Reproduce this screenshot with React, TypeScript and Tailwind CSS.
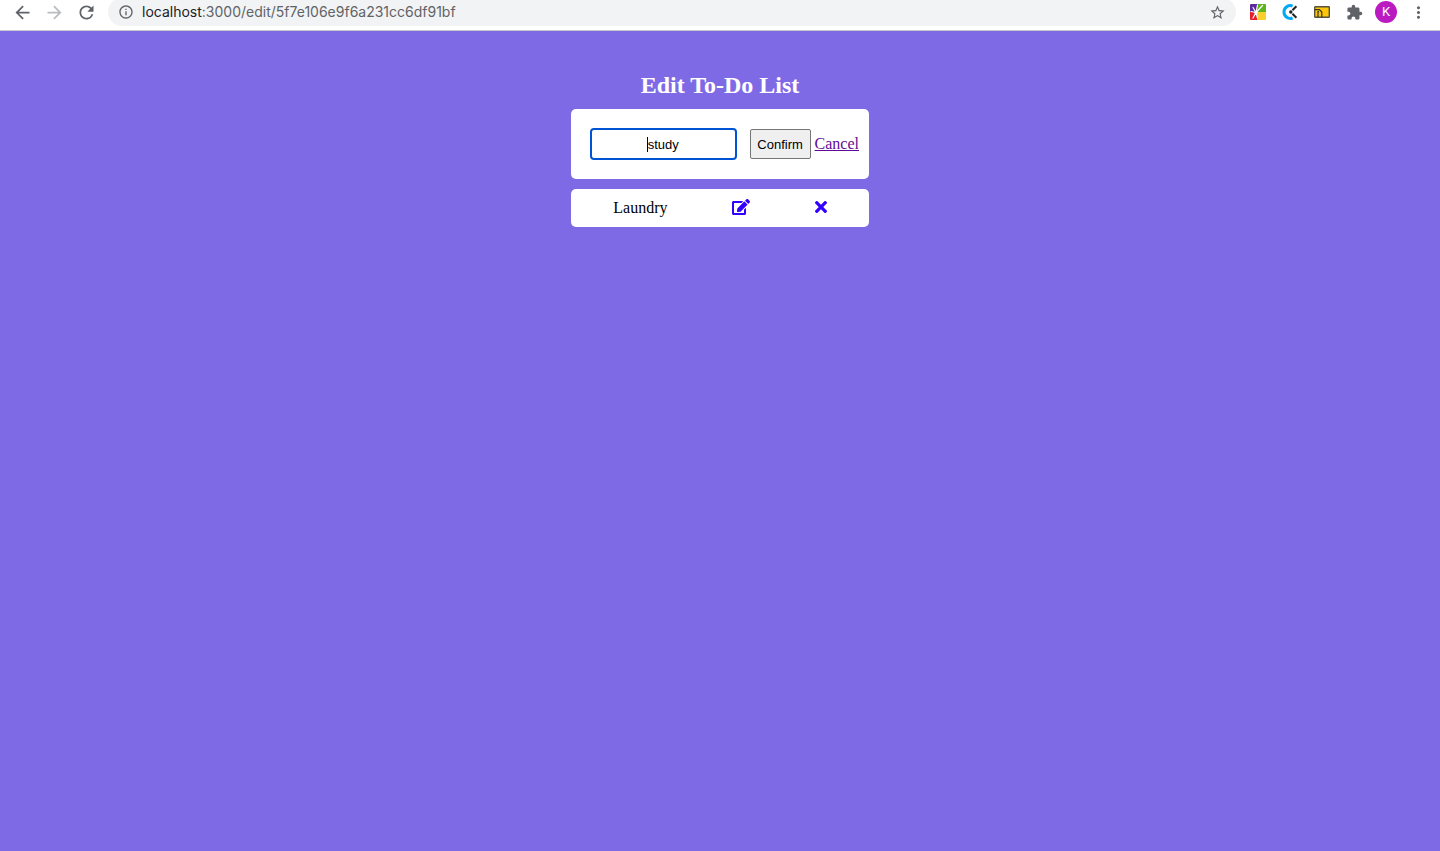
import { useState, type ReactNode } from "react";
import { FaEdit, FaTimes } from "react-icons/fa";
import {
  MdArrowBack,
  MdArrowForward,
  MdExtension,
  MdInfoOutline,
  MdMoreVert,
  MdRefresh,
  MdStarBorder,
} from "react-icons/md";

function ToolButton({ label, children }: { label: string; children: ReactNode }) {
  return (
    <button
      type="button"
      aria-label={label}
      className="flex h-7 w-8 shrink-0 items-center justify-center text-[#5f6368]"
    >
      {children}
    </button>
  );
}

function FireworkIcon() {
  return (
    <svg width="16" height="16" viewBox="0 0 16 16" aria-hidden="true">
      <path d="M1 0h6v8H0V1a1 1 0 0 1 1-1z" fill="#5b2a9d" />
      <path d="M7 0h8a1 1 0 0 1 1 1v7H7z" fill="#5cb51c" />
      <path d="M0 8h7v8H1a1 1 0 0 1-1-1z" fill="#e5202b" />
      <path d="M7 8h9v7a1 1 0 0 1-1 1H7z" fill="#f8cf2c" />
      <path
        d="M6 8.5L12.5 1.5M6 8.5L7.5 1M6 8.5L3 3.5M6 8.5L1 7.5M6 8.5L3 14M6 8.5L7.5 14"
        stroke="#fff"
        strokeWidth="1.2"
        strokeLinecap="round"
      />
      <circle cx="6" cy="8.5" r="1.7" fill="#fff" />
    </svg>
  );
}

function ClockIcon() {
  return (
    <svg width="16" height="16" viewBox="0 0 16 16" fill="none" aria-hidden="true">
      <path d="M10.6 2A6.4 6.4 0 1 0 10.6 14" stroke="#03a9f4" strokeWidth="3" />
      <path d="M10.4 6.2L14.4 2.2M10.4 9.8L14.4 13.8" stroke="#222" strokeWidth="2" />
      <circle cx="8.8" cy="8" r="1.7" fill="#222" />
    </svg>
  );
}

function TicketIcon() {
  return (
    <svg width="16" height="12" viewBox="0 0 16 12" fill="none" aria-hidden="true">
      <rect x="0.7" y="0.7" width="14.6" height="10.6" rx="0.6" fill="#fdc609" stroke="#55533f" strokeWidth="1.4" />
      <path d="M1 3.6H5.4L7.8 6V11M4 11V5.6H5" stroke="#37341f" strokeWidth="1.2" />
    </svg>
  );
}

function BrowserBar() {
  return (
    <header className="flex h-[31px] items-center gap-1.5 overflow-hidden border-b border-[#c9cacd] bg-white px-1.5 pb-1.5">
      <nav className="flex shrink-0" aria-label="History">
        <ToolButton label="Back">
          <MdArrowBack size={21} />
        </ToolButton>
        <ToolButton label="Forward">
          <MdArrowForward size={21} className="text-[#babcbe]" />
        </ToolButton>
        <ToolButton label="Reload">
          <MdRefresh size={21} />
        </ToolButton>
      </nav>
      <div className="flex h-7 min-w-0 flex-1 items-center gap-2 rounded-full bg-[#f1f3f4] px-2.5 font-[Inter,sans-serif] text-sm text-[#5f6368]">
        <MdInfoOutline size={16} className="shrink-0" />
        <p className="min-w-0 flex-1 truncate">
          <span className="text-[#202124]">localhost</span>:3000/edit/5f7e106e9f6a231cc6df91bf
        </p>
        <button type="button" aria-label="Bookmark this page">
          <MdStarBorder size={17} />
        </button>
      </div>
      <div className="flex shrink-0">
        <ToolButton label="Fireworks extension">
          <FireworkIcon />
        </ToolButton>
        <ToolButton label="Clock extension">
          <ClockIcon />
        </ToolButton>
        <ToolButton label="Ticket extension">
          <TicketIcon />
        </ToolButton>
        <ToolButton label="Extensions">
          <MdExtension size={17} />
        </ToolButton>
        <ToolButton label="Profile">
          <span className="flex size-[22px] items-center justify-center rounded-full bg-[#ba1bc1] font-[Roboto,sans-serif] text-[13px] text-white">
            K
          </span>
        </ToolButton>
        <ToolButton label="Menu">
          <MdMoreVert size={19} />
        </ToolButton>
      </div>
    </header>
  );
}

function EditForm() {
  const [text, setText] = useState("study");
  return (
    <form
      onSubmit={(event) => event.preventDefault()}
      className="flex items-center rounded-[5px] bg-white py-[19px] pr-2.5 pl-[19px]"
    >
      <div className="relative min-w-0 flex-1">
        <input
          aria-label="To-do"
          value={text}
          onChange={(event) => setText(event.target.value)}
          className="h-8 w-full rounded-[4px] border-2 border-[#0054d4] bg-white text-center font-['Liberation_Sans',sans-serif] text-[13px] text-black outline-none"
        />
        <span className="absolute top-[9px] left-[57px] h-[15px] w-px bg-black" aria-hidden="true" />
      </div>
      <button
        type="submit"
        className="ml-[13px] h-[30px] w-[61px] rounded-[2px] border border-[#767676] bg-[#efefef] pt-0.5 font-['Liberation_Sans',sans-serif] text-[13px] text-black"
      >
        Confirm
      </button>
      <a href="#cancel" className="ml-1 text-[#5f0a94] underline">
        Cancel
      </a>
    </form>
  );
}

function TodoRow({ title }: { title: string }) {
  return (
    <li className="flex h-[38px] items-center justify-around rounded-[5px] bg-white px-2.5 text-black">
      <span>{title}</span>
      <a href="#edit" aria-label={`Edit ${title}`} className="pb-0.5 text-[#3300ff]">
        <FaEdit size={18} />
      </a>
      <a href="#delete" aria-label={`Delete ${title}`} className="pb-0.5 text-[#3300ff]">
        <FaTimes className="h-[18px] w-3" />
      </a>
    </li>
  );
}

export default function App() {
  return (
    <div className="flex min-h-screen flex-col bg-[#7f6ae6] font-['Liberation_Serif',serif] text-base">
      <BrowserBar />
      <main className="mx-auto flex w-full max-w-[298px] flex-col gap-2.5 pt-10">
        <h1 className="text-center text-2xl leading-7 font-bold text-white">Edit To-Do List</h1>
        <EditForm />
        <ul>
          <TodoRow title="Laundry" />
        </ul>
      </main>
    </div>
  );
}
